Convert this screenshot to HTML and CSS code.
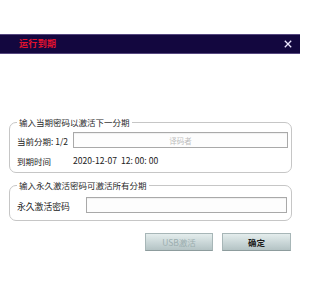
FILE: index.html
```html
<!DOCTYPE html>
<html lang="zh">
<head>
<meta charset="utf-8">
<title>运行到期</title>
<link rel="stylesheet" href="styles.css">
</head>
<body>
<div class="dialog">
  <div class="titlebar">
    <span class="title">运行到期</span>
    <svg class="close" width="8" height="8" viewBox="0 0 8 8"><path d="M0.8 0.8 L7.2 7.2 M7.2 0.8 L0.8 7.2" stroke="#ece6ff" stroke-width="1.3" fill="none"/></svg>
  </div>
  <div class="content">
    <fieldset class="group g1">
      <legend>输入当期密码以激活下一分期</legend>
      <div class="row r1">
        <span class="label l1">当前分期:&nbsp;1/2</span>
        <div class="input"><span class="ph">译码者</span></div>
      </div>
      <div class="row r2">
        <span class="label l1">到期时间</span>
        <span class="value">2020-12-07&nbsp;&nbsp;12:&nbsp;00:&nbsp;00</span>
      </div>
    </fieldset>
    <fieldset class="group g2">
      <legend>输入永久激活密码可激活所有分期</legend>
      <div class="row r3">
        <span class="label l2">永久激活密码</span>
        <div class="input in2"></div>
      </div>
    </fieldset>
    <div class="buttons">
      <div class="btn disabled">USB激活</div>
      <div class="btn primary">确定</div>
    </div>
  </div>
</div>
</body>
</html>
```
FILE: styles.css
```css
html, body {
  margin: 0;
  padding: 0;
  background: #ffffff;
}
body {
  width: 300px;
  height: 300px;
  font-family: "Noto Sans CJK SC", "Noto Sans", sans-serif;
  color: #222;
}
.dialog {
  padding-top: 34px;
}
.titlebar {
  height: 18px;
  background: #13073f;
  border-top: 1px solid #55477f;
  border-bottom: 1px solid #55477f;
  display: flex;
  align-items: center;
  justify-content: space-between;
  padding: 0 8px 0 19px;
}
.title {
  color: #e3122e;
  font-size: 9px;
  letter-spacing: 0.35px;
  line-height: 12px;
  font-weight: bold;
}
.close {
  display: block;
}
.content {
  padding: 62px 8px 0 9px;
}
.group {
  margin: 0;
  padding: 0 3px 0 7px;
  border: 1px solid #c6c6c6;
  border-radius: 7px;
  min-width: 0;
}
.group legend {
  margin-left: 0;
  padding: 0 2px;
  font-size: 8.5px;
  line-height: 12px;
  color: #2a2a2a;
}
.g1 {
  padding-bottom: 4px;
}
.g2 {
  margin-top: 6px;
  padding-bottom: 7px;
}
.row {
  display: flex;
  align-items: center;
  height: 16px;
  font-size: 8.5px;
}
.r1 {
  margin-top: 4px;
}
.r2 {
  margin-top: 4px;
}
.r3 {
  margin-top: 6px;
}
.label {
  flex: none;
  padding-top: 2px;
}
.l1 {
  width: 56px;
}
.l2 {
  width: 69px;
  font-size: 8.8px;
}
.value {
  font-size: 8.6px;
  color: #222;
}
.input {
  flex: 1;
  height: 14px;
  border: 1px solid #a9a9a9;
  background: #fdfdfd;
  box-shadow: inset 0 1px 1px rgba(0,0,0,0.06);
  display: flex;
  align-items: center;
  justify-content: center;
}
.in2 {
  margin-right: 1px;
}
.ph {
  color: #bdbdbd;
  font-size: 7.5px;
}
.buttons {
  display: flex;
  justify-content: flex-end;
  gap: 9px;
  margin-top: 12px;
  padding-right: 1px;
}
.btn {
  width: 66px;
  height: 16px;
  border: 1px solid #a7b6b7;
  border-bottom-color: #8d9c9d;
  background: linear-gradient(#e4eded, #c9d6d7 55%, #b4c3c4);
  font-size: 8.5px;
  line-height: 16px;
  text-align: center;
}
.disabled {
  color: #9caeaf;
}
.primary {
  width: 67px;
  color: #1c1c1c;
  font-weight: bold;
}
```
